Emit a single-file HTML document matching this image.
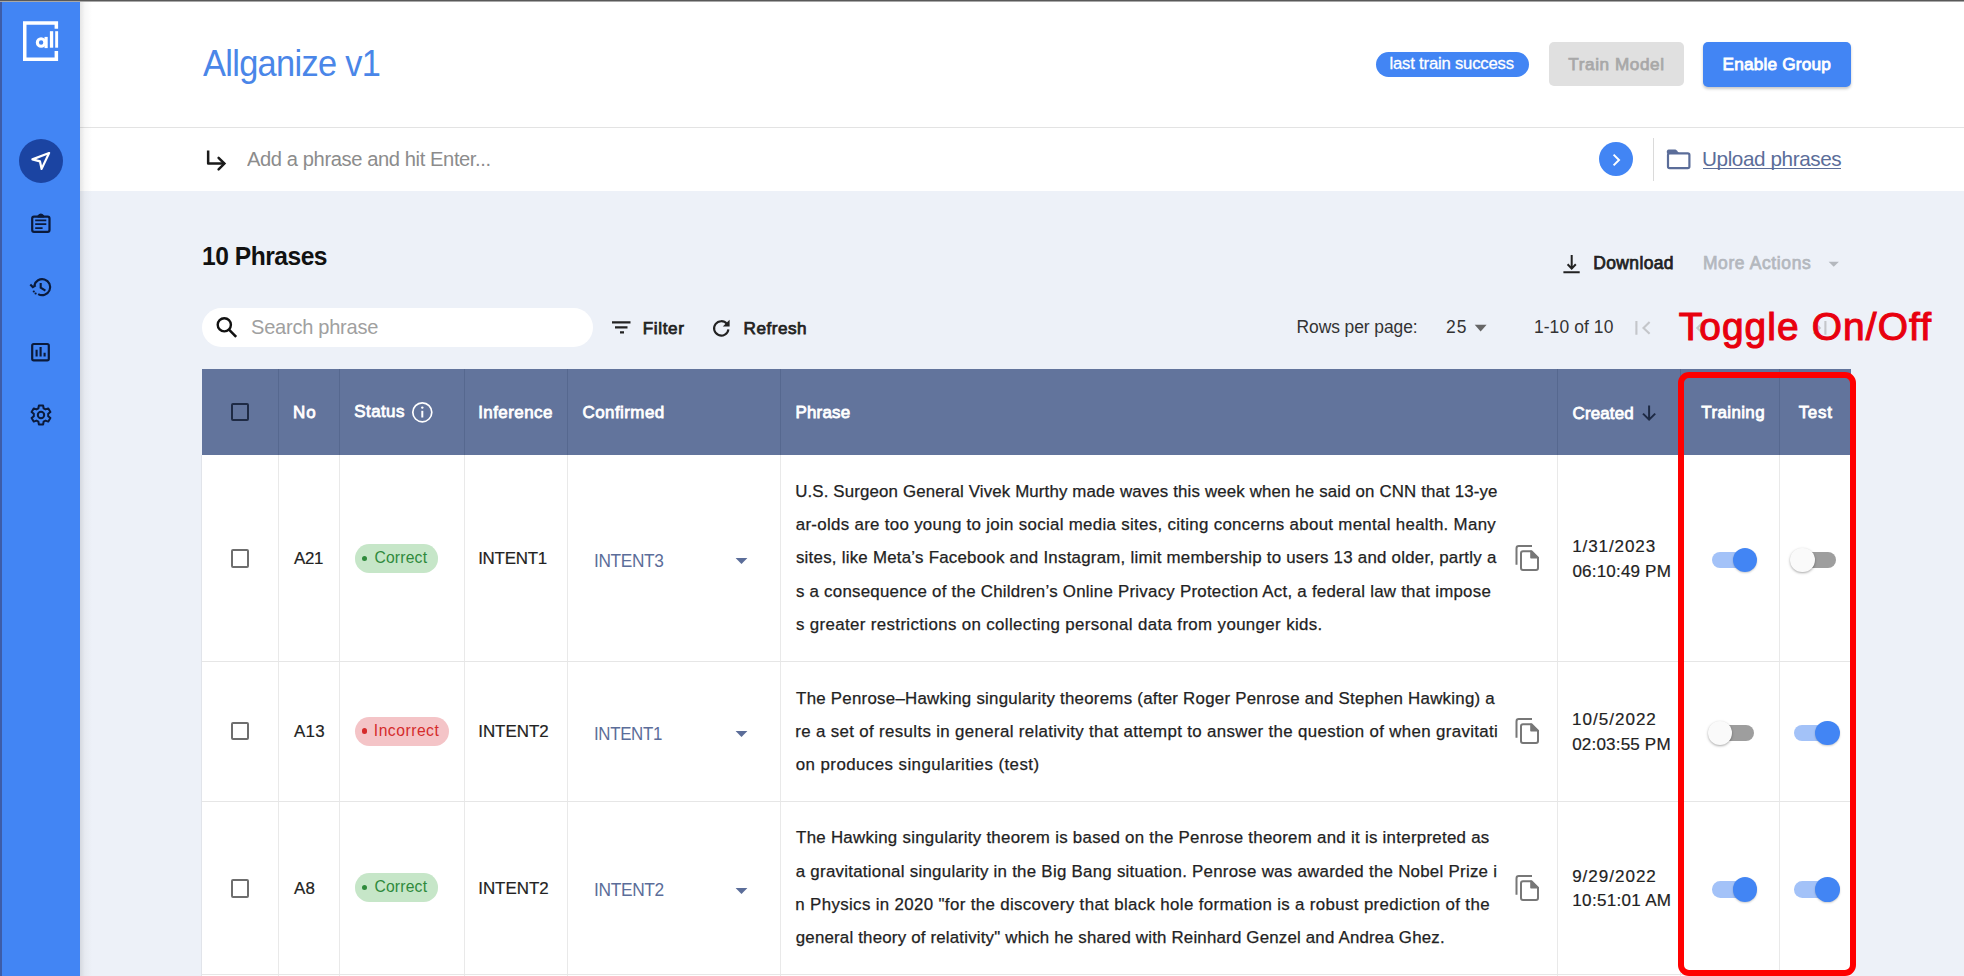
<!DOCTYPE html>
<html><head><meta charset="utf-8"><style>
html,body{margin:0;padding:0;}
body{width:1964px;height:976px;overflow:hidden;position:relative;background:#edf1f8;font-family:"Liberation Sans",sans-serif;}
.t{position:absolute;white-space:pre;}
.r{position:absolute;}
</style></head><body>
<div class="r" style="left:80px;top:0px;width:1884px;height:127px;background:#fff"></div>
<div class="r" style="left:80px;top:127px;width:1884px;height:1px;background:#e3e3e3"></div>
<div class="r" style="left:80px;top:128px;width:1884px;height:63px;background:#fff"></div>
<div class="r" style="left:0px;top:0px;width:80px;height:976px;background:#4285f4"></div>
<div class="r" style="left:0px;top:0px;width:2px;height:976px;background:#3d5ca8"></div>
<div class="r" style="left:80px;top:0px;width:12px;height:976px;background:linear-gradient(to right,rgba(0,0,0,0.10),rgba(0,0,0,0.03) 40%,rgba(0,0,0,0))"></div>
<div class="r" style="left:0px;top:0px;width:1964px;height:1px;background:#595959"></div>
<div class="r" style="left:0px;top:1px;width:1964px;height:1px;background:#a8a8a8"></div>
<svg class="r" style="left:20px;top:18px" width="42" height="46" viewBox="0 0 42 46">
<path d="M36.35 10.7 V4.95 H4.75 V41.25 H36.35 V32.9" fill="none" stroke="#fff" stroke-width="3.5"/>
<rect x="35.2" y="13.2" width="2.9" height="16.5" fill="#fff"/>
<rect x="29.9" y="13.2" width="3.3" height="16.5" fill="#fff"/>
<circle cx="21.1" cy="24.5" r="3.75" fill="none" stroke="#fff" stroke-width="3.1"/>
<rect x="24.5" y="18.9" width="3.2" height="11.2" fill="#fff"/>
</svg>
<div class="r" style="left:18.5px;top:138.7px;width:44.2px;height:44.2px;border-radius:50%;background:#1b44a2"></div>
<svg class="r" style="left:28px;top:145px" width="26" height="30" viewBox="0 0 26 30"><path d="M21.1 8 L4.4 14.4 L12 16.4 L13.6 23.9 Z" fill="none" stroke="#fff" stroke-width="2.2" stroke-linejoin="round"/></svg>
<svg class="r" style="left:28px;top:210px" width="26" height="26" viewBox="0 0 26 26"><rect x="4.2" y="6.6" width="17.3" height="15.2" rx="1.8" fill="none" stroke="#0b1a3a" stroke-width="2.2"/>
<path d="M10.3 6.8 V5.6 Q12.85 2.6 15.4 5.6 V6.8 Z" fill="#0b1a3a" stroke="#0b1a3a" stroke-width="1.4"/>
<path d="M7.2 10.4 H18.3 M7.2 14.1 H18.3 M7.2 18.1 H14.6" stroke="#0b1a3a" stroke-width="1.9"/></svg>
<svg class="r" style="left:27px;top:274px" width="27" height="26" viewBox="0 0 27 26"><path d="M11.2 20.1 A8 8 0 1 0 7.3 11.6" fill="none" stroke="#0b1a3a" stroke-width="2.1"/>
<path d="M3.3 10.5 L5.8 13.1 L8.7 11.3" fill="none" stroke="#0b1a3a" stroke-width="2.1" stroke-linejoin="miter"/>
<circle cx="6.8" cy="17.5" r="1.1" fill="#0b1a3a"/><circle cx="8.6" cy="19.5" r="1.1" fill="#0b1a3a"/>
<path d="M13.7 9 V13.6 L18.4 16.6" fill="none" stroke="#0b1a3a" stroke-width="2.1"/></svg>
<svg class="r" style="left:28px;top:340px" width="26" height="24" viewBox="0 0 26 24"><rect x="4.2" y="4" width="16.6" height="16.4" rx="1.6" fill="none" stroke="#0b1a3a" stroke-width="2.2"/>
<path d="M8.6 16.6 V9.8 M12.6 16.6 V7 M16.6 16.6 V12.8" stroke="#0b1a3a" stroke-width="2.1"/></svg>
<svg class="r" style="left:28px;top:402px" width="26" height="26" viewBox="0 0 26 26"><path d="M10.9 3.5 H15.1 L15.6 6.3 L17.6 7.4 L20.3 6.4 L22.4 10 L20.2 11.8 V14.2 L22.4 16 L20.3 19.6 L17.6 18.6 L15.6 19.7 L15.1 22.5 H10.9 L10.4 19.7 L8.4 18.6 L5.7 19.6 L3.6 16 L5.8 14.2 V11.8 L3.6 10 L5.7 6.4 L8.4 7.4 L10.4 6.3 Z" fill="none" stroke="#0b1a3a" stroke-width="2" stroke-linejoin="round"/>
<circle cx="13" cy="13" r="3.2" fill="none" stroke="#0b1a3a" stroke-width="2"/></svg>
<div class="t" style="left:203.00px;top:45.01px;font-size:37.35px;line-height:37.35px;letter-spacing:-0.747px;transform:scaleX(0.9209);transform-origin:0 0;color:#4a86e8;">Allganize v1</div>
<div class="r" style="left:1376px;top:52px;width:153px;height:24.5px;border-radius:13px;background:#4285f4"></div>
<div class="t" style="left:1389.56px;top:55.91px;font-size:16.70px;line-height:16.70px;letter-spacing:-0.207px;-webkit-text-stroke:0.3px #fff;color:#fff;">last train success</div>
<div class="r" style="left:1549px;top:42px;width:135px;height:44px;border-radius:5px;background:#e0e0e0"></div>
<div class="t" style="left:1568.33px;top:55.71px;font-size:17.15px;line-height:17.15px;letter-spacing:0.584px;-webkit-text-stroke:0.75px #a8a8a8;color:#a8a8a8;">Train Model</div>
<div class="r" style="left:1703px;top:42px;width:148px;height:44.5px;border-radius:5px;background:#4285f4;box-shadow:0 2px 3px rgba(0,0,0,0.22)"></div>
<div class="t" style="left:1722.62px;top:55.82px;font-size:17.24px;line-height:17.24px;letter-spacing:0.164px;-webkit-text-stroke:0.8px #fff;color:#fff;">Enable Group</div>
<svg class="r" style="left:203px;top:147px" width="26" height="27" viewBox="0 0 26 27"><path d="M5.15 3.6 V16.5 H21.6" fill="none" stroke="#1a1a1a" stroke-width="2.5" stroke-linejoin="round"/><path d="M15.6 10.9 L21.4 16.6 L15.6 22.3" fill="none" stroke="#1a1a1a" stroke-width="2.5" stroke-linejoin="miter" stroke-linecap="round"/></svg>
<div class="t" style="left:247.00px;top:149.01px;font-size:20.35px;line-height:20.35px;letter-spacing:-0.407px;transform:scaleX(0.9902);transform-origin:0 0;color:#8c8c8c;">Add a phrase and hit Enter...</div>
<div class="r" style="left:1599px;top:141.7px;width:34.2px;height:34.3px;border-radius:50%;background:#4285f4"></div>
<svg class="r" style="left:1606px;top:149px" width="20" height="20" viewBox="0 0 20 20"><path d="M7.6 5.6 L13 11 L7.6 16.4" fill="none" stroke="#fff" stroke-width="2"/></svg>
<div class="r" style="left:1653px;top:138px;width:1px;height:43px;background:#dadada"></div>
<svg class="r" style="left:1664px;top:146px" width="30" height="26" viewBox="0 0 30 26"><rect x="4" y="7.3" width="21.4" height="14.9" rx="1.6" fill="none" stroke="#5b6d99" stroke-width="2.2"/><path d="M4.5 3.6 H11.3 Q12 3.6 12.6 4.2 L15.4 7.4 H2.9 V5.2 Q2.9 3.6 4.5 3.6 Z" fill="#5b6d99"/></svg>
<div class="t" style="left:1701.85px;top:148.71px;font-size:20.93px;line-height:20.93px;letter-spacing:-0.419px;transform:scaleX(0.9901);transform-origin:0 0;color:#5b6d99;">Upload phrases</div>
<div class="r" style="left:1703px;top:168px;width:138px;height:1.1999999999999886px;background:#5b6d99"></div>
<div class="t" style="left:202.02px;top:243.41px;font-size:26.02px;line-height:26.02px;letter-spacing:-0.520px;font-weight:bold;transform:scaleX(0.9455);transform-origin:0 0;color:#111;">10 Phrases</div>
<svg class="r" style="left:1558px;top:250px" width="28" height="28" viewBox="0 0 28 28"><path d="M13.7 5 V18.6 M9.6 14.3 L13.7 18.6 L17.8 14.3 M5.4 22.2 H21.7" fill="none" stroke="#222" stroke-width="2"/></svg>
<div class="t" style="left:1593.18px;top:255.21px;font-size:17.44px;line-height:17.44px;letter-spacing:0.407px;-webkit-text-stroke:0.75px #222;color:#222;">Download</div>
<div class="t" style="left:1702.88px;top:255.21px;font-size:17.44px;line-height:17.44px;letter-spacing:0.640px;-webkit-text-stroke:0.75px #b4b8be;color:#b4b8be;">More Actions</div>
<svg class="r" style="left:1826px;top:258px" width="16" height="12" viewBox="0 0 16 12"><path d="M2.6 3.8 H12.9 L7.75 8.8 Z" fill="#b4b8be"/></svg>
<div class="r" style="left:201.7px;top:308px;width:391.6px;height:39px;border-radius:20px;background:#fff"></div>
<svg class="r" style="left:212px;top:313px" width="30" height="30" viewBox="0 0 30 30"><circle cx="12.3" cy="11.8" r="6.6" fill="none" stroke="#111" stroke-width="2.4"/><path d="M17 16.6 L24.2 23.8" stroke="#111" stroke-width="2.6"/></svg>
<div class="t" style="left:251.10px;top:316.80px;font-size:20.06px;line-height:20.06px;letter-spacing:-0.264px;color:#a0a0a0;">Search phrase</div>
<svg class="r" style="left:608px;top:316px" width="26" height="22" viewBox="0 0 26 22"><path d="M4 6.4 H22.5 M7 11.4 H19.5 M12 16.4 H16" stroke="#222" stroke-width="2.1"/></svg>
<div class="t" style="left:642.70px;top:319.60px;font-size:17.15px;line-height:17.15px;letter-spacing:0.621px;-webkit-text-stroke:0.75px #222;color:#222;">Filter</div>
<svg class="r" style="left:708px;top:313.5px" width="28" height="28" viewBox="0 0 28 28"><path d="M18.9 9.9 A7.2 7.2 0 1 0 20.4 15.3" fill="none" stroke="#222" stroke-width="2.1"/><path d="M21.6 5.8 V12.6 H14.8 Z" fill="#222"/></svg>
<div class="t" style="left:743.50px;top:319.60px;font-size:17.15px;line-height:17.15px;letter-spacing:0.501px;-webkit-text-stroke:0.75px #222;color:#222;">Refresh</div>
<div class="t" style="left:1296.50px;top:319.41px;font-size:17.44px;line-height:17.44px;letter-spacing:-0.071px;color:#333;">Rows per page:</div>
<div class="t" style="left:1446.03px;top:319.41px;font-size:17.44px;line-height:17.44px;letter-spacing:1.009px;color:#333;">25</div>
<svg class="r" style="left:1472px;top:322px" width="18" height="12" viewBox="0 0 18 12"><path d="M2.7 2.8 H14.6 L8.65 9.4 Z" fill="#666"/></svg>
<div class="t" style="left:1533.89px;top:319.41px;font-size:17.44px;line-height:17.44px;letter-spacing:0.103px;color:#333;">1-10 of 10</div>
<svg class="r" style="left:1632px;top:318px" width="22" height="20" viewBox="0 0 22 20"><path d="M4.4 3 V16.7 M17.6 4 L11.5 9.9 L17.6 15.8" fill="none" stroke="#c4c6ca" stroke-width="2.1"/></svg>
<svg class="r" style="left:1690px;top:318px" width="20" height="20" viewBox="0 0 20 20"><path d="M13.4 4 L7.3 9.9 L13.4 15.8" fill="none" stroke="#c4c6ca" stroke-width="2.1"/></svg>
<svg class="r" style="left:1810px;top:318px" width="22" height="20" viewBox="0 0 22 20"><path d="M3.6 4 L9.7 9.9 L3.6 15.8 M15.4 3 V16.7" fill="none" stroke="#c4c6ca" stroke-width="2.1"/></svg>
<div class="r" style="left:202px;top:369px;width:1649px;height:86px;background:#62749c"></div>
<div class="r" style="left:202px;top:455px;width:1649px;height:521px;background:#fff"></div>
<div class="r" style="left:278.0px;top:369px;width:1px;height:86px;background:#56688f"></div>
<div class="r" style="left:278.0px;top:455px;width:1px;height:521px;background:#e9e9e9"></div>
<div class="r" style="left:338.5px;top:369px;width:1px;height:86px;background:#56688f"></div>
<div class="r" style="left:338.5px;top:455px;width:1px;height:521px;background:#e9e9e9"></div>
<div class="r" style="left:463.5px;top:369px;width:1px;height:86px;background:#56688f"></div>
<div class="r" style="left:463.5px;top:455px;width:1px;height:521px;background:#e9e9e9"></div>
<div class="r" style="left:567.0px;top:369px;width:1px;height:86px;background:#56688f"></div>
<div class="r" style="left:567.0px;top:455px;width:1px;height:521px;background:#e9e9e9"></div>
<div class="r" style="left:780.2px;top:369px;width:1px;height:86px;background:#56688f"></div>
<div class="r" style="left:780.2px;top:455px;width:1px;height:521px;background:#e9e9e9"></div>
<div class="r" style="left:1557.0px;top:369px;width:1px;height:86px;background:#56688f"></div>
<div class="r" style="left:1557.0px;top:455px;width:1px;height:521px;background:#e9e9e9"></div>
<div class="r" style="left:1679.5px;top:369px;width:1px;height:86px;background:#56688f"></div>
<div class="r" style="left:1679.5px;top:455px;width:1px;height:521px;background:#e9e9e9"></div>
<div class="r" style="left:1779.0px;top:369px;width:1px;height:86px;background:#56688f"></div>
<div class="r" style="left:1779.0px;top:455px;width:1px;height:521px;background:#e9e9e9"></div>
<div class="r" style="left:201px;top:455px;width:1px;height:521px;background:#e1e4ea"></div>
<div class="r" style="left:202px;top:661px;width:1649px;height:1px;background:#e6e6e6"></div>
<div class="r" style="left:202px;top:801px;width:1649px;height:1px;background:#e6e6e6"></div>
<div class="r" style="left:202px;top:974px;width:1649px;height:1px;background:#e6e6e6"></div>
<div class="r" style="left:231.4px;top:403.2px;width:14px;height:14px;border:2px solid #1e2a44;border-radius:2px"></div>
<div class="t" style="left:292.94px;top:405.40px;font-size:16.95px;line-height:16.95px;letter-spacing:1.025px;-webkit-text-stroke:0.8px #fff;color:#fff;">No</div>
<div class="t" style="left:354.34px;top:404.10px;font-size:16.95px;line-height:16.95px;letter-spacing:0.402px;-webkit-text-stroke:0.8px #fff;color:#fff;">Status</div>
<svg class="r" style="left:410px;top:400px" width="25" height="25" viewBox="0 0 25 25"><circle cx="12.3" cy="12.3" r="9.5" fill="none" stroke="#fff" stroke-width="1.7"/><path d="M12.3 10.8 V17.5" stroke="#fff" stroke-width="2"/><circle cx="12.3" cy="7.6" r="1.2" fill="#fff"/></svg>
<div class="t" style="left:478.17px;top:405.40px;font-size:16.95px;line-height:16.95px;letter-spacing:0.452px;-webkit-text-stroke:0.8px #fff;color:#fff;">Inference</div>
<div class="t" style="left:582.55px;top:405.31px;font-size:16.95px;line-height:16.95px;letter-spacing:0.440px;-webkit-text-stroke:0.8px #fff;color:#fff;">Confirmed</div>
<div class="t" style="left:795.44px;top:405.31px;font-size:16.95px;line-height:16.95px;letter-spacing:0.216px;-webkit-text-stroke:0.8px #fff;color:#fff;">Phrase</div>
<div class="t" style="left:1572.55px;top:406.31px;font-size:16.95px;line-height:16.95px;letter-spacing:0.150px;-webkit-text-stroke:0.8px #fff;color:#fff;">Created</div>
<svg class="r" style="left:1638px;top:402px" width="22" height="22" viewBox="0 0 22 22"><path d="M11.1 3.5 V17.5 M5 11.6 L11.1 17.7 L17.2 11.6" fill="none" stroke="#1e2a44" stroke-width="2"/></svg>
<div class="t" style="left:1701.36px;top:405.31px;font-size:16.95px;line-height:16.95px;letter-spacing:0.379px;-webkit-text-stroke:0.8px #fff;color:#fff;">Training</div>
<div class="t" style="left:1798.66px;top:405.31px;font-size:16.95px;line-height:16.95px;letter-spacing:0.736px;-webkit-text-stroke:0.8px #fff;color:#fff;">Test</div>
<div class="r" style="left:231.2px;top:549.4px;width:14.2px;height:14.2px;border:2px solid #6e6e6e;border-radius:2px"></div>
<div class="t" style="left:294.10px;top:551.20px;font-size:16.92px;line-height:16.92px;letter-spacing:-0.338px;-webkit-text-stroke:0.2px #222;transform:scaleX(0.9973);transform-origin:0 0;color:#222;">A21</div>
<div class="r" style="left:355px;top:544.2px;width:82.7px;height:28.6px;border-radius:14.3px;background:#c6e6c8"></div>
<div class="r" style="left:361.7px;top:555.6px;width:5.8px;height:5.8px;border-radius:50%;background:#2f8a3c"></div>
<div class="t" style="left:374.42px;top:549.81px;font-size:15.70px;line-height:15.70px;letter-spacing:0.192px;color:#2f8a3c;">Correct</div>
<div class="t" style="left:478.18px;top:551.20px;font-size:16.92px;line-height:16.92px;letter-spacing:-0.247px;-webkit-text-stroke:0.2px #222;color:#222;">INTENT1</div>
<div class="t" style="left:594.25px;top:552.82px;font-size:17.44px;line-height:17.44px;letter-spacing:-0.349px;transform:scaleX(0.9900);transform-origin:0 0;color:#5b6d99;">INTENT3</div>
<svg class="r" style="left:733px;top:555px" width="16" height="12" viewBox="0 0 16 12"><path d="M2.6 3 H14.4 L8.5 9.1 Z" fill="#5b6d99"/></svg>
<div class="t" style="left:795.16px;top:483.61px;font-size:16.86px;line-height:16.86px;letter-spacing:0.142px;-webkit-text-stroke:0.25px #222;color:#222;">U.S. Surgeon General Vivek Murthy made waves this week when he said on CNN that 13-ye</div>
<div class="t" style="left:795.75px;top:516.91px;font-size:16.86px;line-height:16.86px;letter-spacing:0.312px;-webkit-text-stroke:0.25px #222;color:#222;">ar-olds are too young to join social media sites, citing concerns about mental health. Many</div>
<div class="t" style="left:795.92px;top:550.22px;font-size:16.86px;line-height:16.86px;letter-spacing:0.247px;-webkit-text-stroke:0.25px #222;color:#222;">sites, like Meta’s Facebook and Instagram, limit membership to users 13 and older, partly a</div>
<div class="t" style="left:795.92px;top:583.51px;font-size:16.86px;line-height:16.86px;letter-spacing:0.251px;-webkit-text-stroke:0.25px #222;color:#222;">s a consequence of the Children’s Online Privacy Protection Act, a federal law that impose</div>
<div class="t" style="left:795.92px;top:616.81px;font-size:16.86px;line-height:16.86px;letter-spacing:0.368px;-webkit-text-stroke:0.25px #222;color:#222;">s greater restrictions on collecting personal data from younger kids.</div>
<svg class="r" style="left:1511px;top:541px" width="32" height="32" viewBox="0 0 32 32"><path d="M5.5 23.7 V7.4 Q5.5 5.1 7.8 5.1 H21" fill="none" stroke="#777" stroke-width="2"/><path d="M12 10.3 H20.5 L27 16.8 V27 Q27 29 25 29 H12 Q10 29 10 27 V12.3 Q10 10.3 12 10.3 Z" fill="none" stroke="#777" stroke-width="2" stroke-linejoin="round"/><path d="M20 10.3 V16.8 H27 Z" fill="#777" stroke="#777" stroke-width="1.6" stroke-linejoin="round"/></svg>
<div class="t" style="left:1572.22px;top:538.20px;font-size:17.06px;line-height:17.06px;letter-spacing:0.891px;-webkit-text-stroke:0.2px #222;color:#222;">1/31/2023</div>
<div class="t" style="left:1572.42px;top:562.61px;font-size:17.06px;line-height:17.06px;letter-spacing:0.180px;-webkit-text-stroke:0.2px #222;color:#222;">06:10:49 PM</div>
<div class="r" style="left:1711.5px;top:551.7px;width:42px;height:16.6px;border-radius:8.3px;background:#a3c2f8"></div>
<div class="r" style="left:1732.8px;top:547.7px;width:24.6px;height:24.6px;border-radius:50%;background:#4285f4;box-shadow:0 1px 2px rgba(0,0,0,0.2)"></div>
<div class="r" style="left:1794px;top:551.7px;width:42px;height:16.6px;border-radius:8.3px;background:#9e9e9e"></div>
<div class="r" style="left:1790.1px;top:547.7px;width:24.6px;height:24.6px;border-radius:50%;background:#fafafa;box-shadow:0 1px 2.5px rgba(0,0,0,0.35)"></div>
<div class="r" style="left:231.2px;top:721.7px;width:14.2px;height:14.2px;border:2px solid #6e6e6e;border-radius:2px"></div>
<div class="t" style="left:294.10px;top:723.70px;font-size:16.92px;line-height:16.92px;letter-spacing:0.181px;-webkit-text-stroke:0.2px #222;color:#222;">A13</div>
<div class="r" style="left:355px;top:716.8px;width:94.1px;height:28.8px;border-radius:14.4px;background:#f4c4c7"></div>
<div class="r" style="left:361.6px;top:728.2px;width:5.8px;height:5.8px;border-radius:50%;background:#d52b2b"></div>
<div class="t" style="left:373.79px;top:722.70px;font-size:15.70px;line-height:15.70px;letter-spacing:0.501px;color:#d52b2b;">Incorrect</div>
<div class="t" style="left:478.18px;top:723.70px;font-size:16.92px;line-height:16.92px;letter-spacing:0.017px;-webkit-text-stroke:0.2px #222;color:#222;">INTENT2</div>
<div class="t" style="left:594.28px;top:726.10px;font-size:17.44px;line-height:17.44px;letter-spacing:-0.349px;transform:scaleX(0.9678);transform-origin:0 0;color:#5b6d99;">INTENT1</div>
<svg class="r" style="left:733px;top:728px" width="16" height="12" viewBox="0 0 16 12"><path d="M2.6 3 H14.4 L8.5 9.1 Z" fill="#5b6d99"/></svg>
<div class="t" style="left:796.09px;top:690.81px;font-size:16.86px;line-height:16.86px;letter-spacing:0.254px;-webkit-text-stroke:0.25px #222;color:#222;">The Penrose–Hawking singularity theorems (after Roger Penrose and Stephen Hawking) a</div>
<div class="t" style="left:795.33px;top:724.11px;font-size:16.86px;line-height:16.86px;letter-spacing:0.345px;-webkit-text-stroke:0.25px #222;color:#222;">re a set of results in general relativity that attempt to answer the question of when gravitati</div>
<div class="t" style="left:795.75px;top:757.41px;font-size:16.86px;line-height:16.86px;letter-spacing:0.441px;-webkit-text-stroke:0.25px #222;color:#222;">on produces singularities (test)</div>
<svg class="r" style="left:1511px;top:714.2px" width="32" height="32" viewBox="0 0 32 32"><path d="M5.5 23.7 V7.4 Q5.5 5.1 7.8 5.1 H21" fill="none" stroke="#777" stroke-width="2"/><path d="M12 10.3 H20.5 L27 16.8 V27 Q27 29 25 29 H12 Q10 29 10 27 V12.3 Q10 10.3 12 10.3 Z" fill="none" stroke="#777" stroke-width="2" stroke-linejoin="round"/><path d="M20 10.3 V16.8 H27 Z" fill="#777" stroke="#777" stroke-width="1.6" stroke-linejoin="round"/></svg>
<div class="t" style="left:1572.02px;top:711.11px;font-size:17.06px;line-height:17.06px;letter-spacing:1.000px;-webkit-text-stroke:0.2px #222;color:#222;">10/5/2022</div>
<div class="t" style="left:1572.22px;top:735.51px;font-size:17.06px;line-height:17.06px;letter-spacing:0.170px;-webkit-text-stroke:0.2px #222;color:#222;">02:03:55 PM</div>
<div class="r" style="left:1711.5px;top:724.7px;width:42px;height:16.6px;border-radius:8.3px;background:#9e9e9e"></div>
<div class="r" style="left:1707.6px;top:720.7px;width:24.6px;height:24.6px;border-radius:50%;background:#fafafa;box-shadow:0 1px 2.5px rgba(0,0,0,0.35)"></div>
<div class="r" style="left:1794px;top:724.7px;width:42px;height:16.6px;border-radius:8.3px;background:#a3c2f8"></div>
<div class="r" style="left:1815.3px;top:720.7px;width:24.6px;height:24.6px;border-radius:50%;background:#4285f4;box-shadow:0 1px 2px rgba(0,0,0,0.2)"></div>
<div class="r" style="left:231.2px;top:879.4px;width:14.2px;height:14.2px;border:2px solid #6e6e6e;border-radius:2px"></div>
<div class="t" style="left:294.10px;top:880.70px;font-size:16.92px;line-height:16.92px;letter-spacing:0.136px;-webkit-text-stroke:0.2px #222;color:#222;">A8</div>
<div class="r" style="left:355px;top:873.3px;width:82.7px;height:28.6px;border-radius:14.3px;background:#c6e6c8"></div>
<div class="r" style="left:361.7px;top:884.7px;width:5.8px;height:5.8px;border-radius:50%;background:#2f8a3c"></div>
<div class="t" style="left:374.42px;top:879.31px;font-size:15.70px;line-height:15.70px;letter-spacing:0.192px;color:#2f8a3c;">Correct</div>
<div class="t" style="left:478.18px;top:880.70px;font-size:16.92px;line-height:16.92px;letter-spacing:0.017px;-webkit-text-stroke:0.2px #222;color:#222;">INTENT2</div>
<div class="t" style="left:594.24px;top:882.10px;font-size:17.44px;line-height:17.44px;letter-spacing:-0.349px;transform:scaleX(0.9954);transform-origin:0 0;color:#5b6d99;">INTENT2</div>
<svg class="r" style="left:733px;top:885px" width="16" height="12" viewBox="0 0 16 12"><path d="M2.6 3 H14.4 L8.5 9.1 Z" fill="#5b6d99"/></svg>
<div class="t" style="left:796.09px;top:830.22px;font-size:16.86px;line-height:16.86px;letter-spacing:0.277px;-webkit-text-stroke:0.25px #222;color:#222;">The Hawking singularity theorem is based on the Penrose theorem and it is interpreted as</div>
<div class="t" style="left:795.75px;top:863.51px;font-size:16.86px;line-height:16.86px;letter-spacing:0.270px;-webkit-text-stroke:0.25px #222;color:#222;">a gravitational singularity in the Big Bang situation. Penrose was awarded the Nobel Prize i</div>
<div class="t" style="left:795.33px;top:896.81px;font-size:16.86px;line-height:16.86px;letter-spacing:0.354px;-webkit-text-stroke:0.25px #222;color:#222;">n Physics in 2020 "for the discovery that black hole formation is a robust prediction of the</div>
<div class="t" style="left:795.75px;top:930.11px;font-size:16.86px;line-height:16.86px;letter-spacing:0.194px;-webkit-text-stroke:0.25px #222;color:#222;">general theory of relativity" which he shared with Reinhard Genzel and Andrea Ghez.</div>
<svg class="r" style="left:1511px;top:871px" width="32" height="32" viewBox="0 0 32 32"><path d="M5.5 23.7 V7.4 Q5.5 5.1 7.8 5.1 H21" fill="none" stroke="#777" stroke-width="2"/><path d="M12 10.3 H20.5 L27 16.8 V27 Q27 29 25 29 H12 Q10 29 10 27 V12.3 Q10 10.3 12 10.3 Z" fill="none" stroke="#777" stroke-width="2" stroke-linejoin="round"/><path d="M20 10.3 V16.8 H27 Z" fill="#777" stroke="#777" stroke-width="1.6" stroke-linejoin="round"/></svg>
<div class="t" style="left:1572.13px;top:867.70px;font-size:17.06px;line-height:17.06px;letter-spacing:0.986px;-webkit-text-stroke:0.2px #222;color:#222;">9/29/2022</div>
<div class="t" style="left:1572.32px;top:892.01px;font-size:17.06px;line-height:17.06px;letter-spacing:0.302px;-webkit-text-stroke:0.2px #222;color:#222;">10:51:01 AM</div>
<div class="r" style="left:1711.5px;top:881.2px;width:42px;height:16.6px;border-radius:8.3px;background:#a3c2f8"></div>
<div class="r" style="left:1732.8px;top:877.2px;width:24.6px;height:24.6px;border-radius:50%;background:#4285f4;box-shadow:0 1px 2px rgba(0,0,0,0.2)"></div>
<div class="r" style="left:1794px;top:881.2px;width:42px;height:16.6px;border-radius:8.3px;background:#a3c2f8"></div>
<div class="r" style="left:1815.3px;top:877.2px;width:24.6px;height:24.6px;border-radius:50%;background:#4285f4;box-shadow:0 1px 2px rgba(0,0,0,0.2)"></div>
<div class="r" style="left:1678px;top:372px;width:166px;height:592px;border:6px solid #ff0000;border-radius:11px"></div>
<div class="t" style="left:1678.67px;top:308.20px;font-size:38.84px;line-height:38.84px;letter-spacing:1.119px;-webkit-text-stroke:1.1px #e8000e;color:#e8000e;">Toggle On/Off</div>
</body></html>
